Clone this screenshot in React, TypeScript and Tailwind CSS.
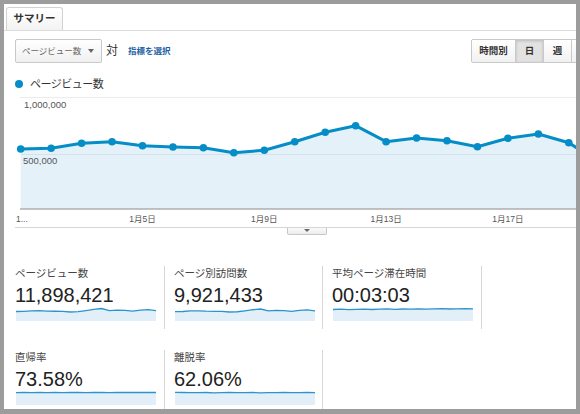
import React from 'react';

// main page view series (pixel y values in page coords)
const series = [149, 148.3, 143.3, 141.7, 145.7, 147, 147.7, 152.7, 150.3, 141.7, 132.3, 125.7, 141.7, 138, 140.7, 146.7, 138.3, 134, 142.7, 162.5];
const px = (i: number) => 20.7 + i * 30.45;

const Sparkline: React.FC<{ ys: number[]; bottom?: number }> = ({ ys, bottom = 14 }) => {
  const step = 140 / (ys.length - 1);
  const line = ys.map((y, i) => `${(i * step).toFixed(1)},${y}`).join(' ');
  return (
    <svg width="140" height="15" viewBox="0 0 140 15" className="block ml-[1px]">
      <polygon points={`0,${bottom} ${line} 140,${bottom}`} fill="#e3eff8" />
      <polyline points={line} fill="none" stroke="#2b94cd" strokeWidth="1.3" />
    </svg>
  );
};

const spark1 = series.slice(0, 19).map(v => +(1.5 + ((v - 125.7) / 27) * 3.5).toFixed(2));
const spark2 = series.slice(0, 19).map(v => +(2 + ((v - 125.7) / 27) * 3).toFixed(2));
const spark3 = [2.5, 2.2, 2.6, 2.4, 2.1, 2.5, 2.2, 1.9, 2.3, 2.0, 2.2, 1.8, 2.1, 1.9, 1.7, 2.0, 1.8, 1.7, 1.8];
const flat1 = [1.6, 1.5, 1.7, 1.5, 1.6, 1.4, 1.6, 1.5, 1.5, 1.6, 1.4, 1.5, 1.6, 1.5, 1.5, 1.4, 1.5, 1.5, 1.5];
const flat2 = [1.4, 1.5, 1.7, 1.6, 1.5, 1.8, 1.6, 1.5, 1.7, 1.6, 1.5, 1.8, 1.6, 1.7, 1.5, 1.6, 1.7, 1.5, 1.6];

const Metric: React.FC<{ label: string; value: string; ys: number[]; className: string }> = ({ label, value, ys, className }) => (
  <div className={className}>
    <div className="h-[14px] text-[10.5px] leading-[14px] text-[#444] whitespace-nowrap">{label}</div>
    <div className="mt-[3px] text-[20px] leading-[24px] text-[#222]">{value}</div>
    <Sparkline ys={ys} />
  </div>
);

export default function App() {
  const line = series.map((y, i) => `${px(i).toFixed(1)},${y}`).join(' ');
  const area = `${px(0)},209 ${line} ${px(series.length - 1)},209`;

  return (
    <div className="w-[580px] h-[414px] bg-[#9c9c9c] pt-[4px] pl-[4px] pr-[4px] pb-[5px] font-['Liberation_Sans','Noto_Sans_CJK_JP',sans-serif] text-[#333]">
      <div className="h-full bg-white overflow-hidden">
        {/* Tabs */}
        <div className="pt-[3px] pl-[2px] border-b border-[#dcdcdc]">
          <div className="w-[57px] h-[23px] border border-b-0 border-[#d2d2d2] rounded-t-[3px] bg-gradient-to-b from-white to-[#f3f3f3] flex items-center justify-center text-[10.5px] font-bold text-[#333]">
            サマリー
          </div>
        </div>

        {/* Controls */}
        <div className="mt-[8px] h-[24px] pl-[11px] flex items-center">
          <div className="w-[87px] h-[24px] border border-[#c9c9c9] rounded-[2px] bg-gradient-to-b from-white to-[#f0f0f0] flex items-center pl-[6px] pr-[7px]">
            <span className="text-[8.5px] text-[#666] whitespace-nowrap">ページビュー数</span>
            <span className="ml-auto w-0 h-0 border-x-[3px] border-x-transparent border-t-[4px] border-t-[#666]" />
          </div>
          <span className="ml-[4px] text-[12px] text-[#333]">対</span>
          <span className="ml-[10px] text-[8.5px] font-bold text-[#1f5fa4] whitespace-nowrap">指標を選択</span>
          <div className="ml-auto mr-[-26px] flex h-[24px] border border-[#c9c9c9] rounded-[2px] text-[9.5px] font-bold text-[#333]">
            <div className="w-[43px] flex items-center justify-center bg-gradient-to-b from-white to-[#f1f1f1]">時間別</div>
            <div className="w-[28px] flex items-center justify-center border-l border-[#c9c9c9] bg-[#e2e2e2] shadow-[inset_0_1px_3px_rgba(0,0,0,0.18)]">日</div>
            <div className="w-[28px] flex items-center justify-center border-l border-[#c9c9c9] bg-gradient-to-b from-white to-[#f1f1f1]">週</div>
            <div className="w-[30px] border-l border-[#c9c9c9] bg-gradient-to-b from-white to-[#f1f1f1]" />
          </div>
        </div>

        {/* Legend */}
        <div className="mt-[14px] h-[14px] pl-[11px] flex items-center">
          <span className="w-[8px] h-[8px] rounded-full bg-[#058dc7]" />
          <span className="ml-[7px] text-[11px] tracking-[-0.5px] text-[#333]">ページビュー数</span>
        </div>

        {/* Chart */}
        <svg width="572" height="134" viewBox="4 91 572 134" className="block">
          <line x1="20" y1="97.5" x2="576" y2="97.5" stroke="#ececec" strokeWidth="1" />
          <polygon points={area} fill="#e5f1f9" />
          <line x1="20.7" y1="154.5" x2="576" y2="154.5" stroke="#d3e2ec" strokeWidth="1" />
          <polyline points={line} fill="none" stroke="#058dc7" strokeWidth="3" strokeLinejoin="round" />
          {series.map((y, i) => (
            <circle key={i} cx={px(i)} cy={y} r="3.8" fill="#058dc7" />
          ))}
          <line x1="20" y1="209" x2="576" y2="209" stroke="#8a8a8a" strokeWidth="1" />
          <text x="24" y="108" fontSize="9.5" fill="#555">1,000,000</text>
          <text x="23" y="164" fontSize="9.5" fill="#555">500,000</text>
          <text x="16" y="221.5" fontSize="8.5" fill="#555">1...</text>
          <text x={px(4)} y="221.5" fontSize="8.5" fill="#555" textAnchor="middle">1月5日</text>
          <text x={px(8)} y="221.5" fontSize="8.5" fill="#555" textAnchor="middle">1月9日</text>
          <text x={px(12)} y="221.5" fontSize="8.5" fill="#555" textAnchor="middle">1月13日</text>
          <text x={px(16)} y="221.5" fontSize="8.5" fill="#555" textAnchor="middle">1月17日</text>
        </svg>

        {/* Drag handle */}
        <div className="mt-[2px] ml-[11px] h-[8px] border-t border-[#d6d6d6] pl-[272px]">
          <div className="w-[40px] h-[7px] border border-t-0 border-[#c8c8c8] rounded-b-[2px] bg-gradient-to-b from-[#fafafa] to-[#ececec] flex justify-center pt-[1px]">
            <span className="w-0 h-0 border-x-[3px] border-x-transparent border-t-[3px] border-t-[#666]" />
          </div>
        </div>

        {/* Metrics */}
        <div className="mt-[31px] pl-[11px]">
          <div className="flex h-[63px]">
            <Metric className="w-[150px] pr-[8px] border-r border-[#d6d6d6]" label="ページビュー数" value="11,898,421" ys={spark1} />
            <Metric className="w-[158px] pl-[9px] pr-[7px] border-r border-[#d6d6d6]" label="ページ別訪問数" value="9,921,433" ys={spark2} />
            <Metric className="w-[159px] pl-[9px] pr-[8px] border-r border-[#d6d6d6]" label="平均ページ滞在時間" value="00:03:03" ys={spark3} />
          </div>
          <div className="flex h-[70px] mt-[21px]">
            <Metric className="w-[150px] pr-[8px] border-r border-[#d6d6d6]" label="直帰率" value="73.58%" ys={flat1} />
            <Metric className="w-[158px] pl-[9px] pr-[7px] border-r border-[#d6d6d6]" label="離脱率" value="62.06%" ys={flat2} />
          </div>
        </div>
      </div>
    </div>
  );
}
